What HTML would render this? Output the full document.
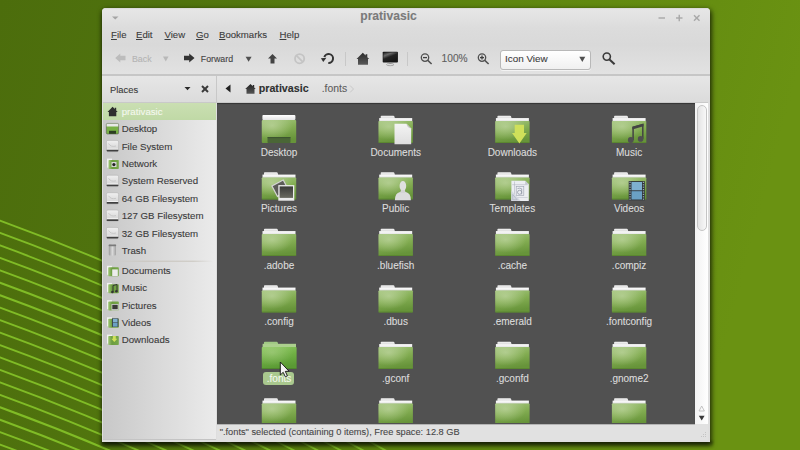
<!DOCTYPE html><html><head><meta charset="utf-8"><style>html,body{margin:0;padding:0;width:800px;height:450px;overflow:hidden;position:relative;font-family:"Liberation Sans", sans-serif;} u{text-decoration:underline;text-decoration-thickness:1px;text-underline-offset:0.6px;} div{-webkit-text-stroke:0.1px currentColor;}</style></head><body><svg style="position:absolute;left:0;top:0" width="800" height="450">
<defs>
<linearGradient id="bg" x1="0" y1="0" x2="1" y2="0.15">
<stop offset="0" stop-color="#4c6d0c"/>
<stop offset="0.2" stop-color="#4f720e"/>
<stop offset="0.6" stop-color="#5d850f"/>
<stop offset="1" stop-color="#6a9212"/>
</linearGradient>
<clipPath id="fan"><polygon points="0,215 102,253 395,452 0,452"/></clipPath>
<filter id="blur1"><feGaussianBlur stdDeviation="0.7"/></filter>
</defs>
<rect width="800" height="450" fill="url(#bg)"/>
<g clip-path="url(#fan)" stroke="#80bc26" stroke-width="1.9" fill="none" filter="url(#blur1)"><path d="M-10,216.9 Q250,310.5 510,475.5"/><path d="M-10,229.3 Q250,322.9 510,487.9"/><path d="M-10,241.8 Q250,335.4 510,500.4"/><path d="M-10,254.3 Q250,347.9 510,512.9"/><path d="M-10,266.7 Q250,360.3 510,525.3"/><path d="M-10,279.1 Q250,372.8 510,537.8"/><path d="M-10,291.6 Q250,385.2 510,550.2"/><path d="M-10,304.0 Q250,397.6 510,562.6"/><path d="M-10,316.5 Q250,410.1 510,575.1"/><path d="M-10,328.9 Q250,422.6 510,587.5"/><path d="M-10,341.4 Q250,435.0 510,600.0"/><path d="M-10,353.8 Q250,447.4 510,612.5"/><path d="M-10,366.3 Q250,459.9 510,624.9"/><path d="M-10,378.8 Q250,472.4 510,637.4"/><path d="M-10,391.2 Q250,484.8 510,649.8"/><path d="M-10,403.6 Q250,497.2 510,662.2"/><path d="M-10,416.1 Q250,509.7 510,674.7"/><path d="M-10,428.5 Q250,522.1 510,687.1"/><path d="M-10,441.0 Q250,534.6 510,699.6"/><path d="M-10,453.4 Q250,547.0 510,712.0"/></g></svg>
<div style="position:absolute;left:102px;top:8px;width:608px;height:434px;border-radius:4px 4px 0 0;box-shadow:1px 2px 5px 1px rgba(0,0,0,0.55), 0 3px 4px rgba(0,0,0,0.35);"></div>
<div style="position:absolute;left:101px;top:441px;width:612px;height:7px;background:linear-gradient(rgba(0,0,0,0.4),rgba(0,0,0,0));filter:blur(1.2px);"></div>
<div style="position:absolute;left:102px;top:8px;width:608px;height:434px;border-radius:4px 4px 0 0;background:#dedede;"></div>
<div style="position:absolute;left:102px;top:8px;width:608px;height:67px;border-radius:4px 4px 0 0;background:linear-gradient(#d6d6d6,#e6e6e6 2.5%,#dcdcdc 30%,#d9d9d9 55%,#e2e2e2);"></div>
<div style="position:absolute;left:102px;top:74px;width:608px;height:1.5px;background:#c6c6c6;"></div>
<div style="position:absolute;left:102px;top:75.5px;width:608px;height:27.5px;background:linear-gradient(#e6e6e6,#dbdbdb);"></div>
<div style="position:absolute;left:216px;top:76px;width:1px;height:27px;background:#c8c8c8;"></div>
<div style="position:absolute;left:103px;top:102px;width:605px;height:1px;background:#c9c9c9;"></div>
<div style="position:absolute;left:103px;top:103px;width:113px;height:336px;background:linear-gradient(90deg,#c8c8c8,#ebebeb);"></div>
<div style="position:absolute;left:103px;top:438.5px;width:113px;height:1px;background:#c4c4c4;"></div>
<div style="position:absolute;left:103px;top:103px;width:113px;height:17px;background:linear-gradient(#cadfb2,#c0d9a6);"></div>
<div style="position:absolute;left:217px;top:103px;width:478px;height:320.5px;background:#515151;box-shadow:inset 0 1px 1px rgba(0,0,0,0.35);"></div>
<div style="position:absolute;left:695px;top:103px;width:13px;height:320.5px;background:linear-gradient(90deg,#f2f2f2,#ffffff);"></div>
<div style="position:absolute;left:697px;top:105px;width:9.5px;height:126px;border-radius:5px;border:1px solid #c4c4c4;background:linear-gradient(90deg,#e4e4e4,#f8f8f8);box-sizing:border-box;"></div>
<div style="position:absolute;left:217px;top:423.5px;width:491px;height:16.5px;background:#e1e1e1;"></div>
<div style="position:absolute;left:217px;top:423.5px;width:478px;height:1px;background:#b4b4b4;"></div>
<div style="position:absolute;top:10.36px;font-size:12.1px;line-height:12.1px;color:#7a7a7a;font-weight:bold;white-space:nowrap;left:288.50px;width:200px;text-align:center;">prativasic</div>
<svg style="position:absolute;left:0;top:0" width="800" height="450"><polygon points="112,16.5 118.5,16.5 115.25,19.5" fill="#a4a4a4"/><g stroke="#a8a8a8" stroke-width="1.4"><line x1="658.5" y1="18" x2="665" y2="18"/><line x1="676" y1="18" x2="682.5" y2="18"/><line x1="679.25" y1="14.8" x2="679.25" y2="21.2"/><line x1="694" y1="15.2" x2="699.5" y2="20.7"/><line x1="699.5" y1="15.2" x2="694" y2="20.7"/></g></svg>
<div style="position:absolute;top:29.87px;font-size:9.6px;line-height:9.6px;color:#3c3c3c;font-weight:normal;white-space:nowrap;left:111.00px;"><u>F</u>ile</div>
<div style="position:absolute;top:29.87px;font-size:9.6px;line-height:9.6px;color:#3c3c3c;font-weight:normal;white-space:nowrap;left:136.00px;"><u>E</u>dit</div>
<div style="position:absolute;top:29.87px;font-size:9.6px;line-height:9.6px;color:#3c3c3c;font-weight:normal;white-space:nowrap;left:164.50px;"><u>V</u>iew</div>
<div style="position:absolute;top:29.87px;font-size:9.6px;line-height:9.6px;color:#3c3c3c;font-weight:normal;white-space:nowrap;left:196.00px;"><u>G</u>o</div>
<div style="position:absolute;top:29.87px;font-size:9.6px;line-height:9.6px;color:#3c3c3c;font-weight:normal;white-space:nowrap;left:219.00px;"><u>B</u>ookmarks</div>
<div style="position:absolute;top:29.87px;font-size:9.6px;line-height:9.6px;color:#3c3c3c;font-weight:normal;white-space:nowrap;left:279.50px;"><u>H</u>elp</div>
<div style="position:absolute;top:54.55px;font-size:8.8px;line-height:8.8px;color:#b4b4b4;font-weight:normal;white-space:nowrap;left:132.00px;">Back</div>
<div style="position:absolute;top:54.55px;font-size:8.8px;line-height:8.8px;color:#444;font-weight:normal;white-space:nowrap;left:200.80px;">Forward</div>
<div style="position:absolute;top:53.97px;font-size:10.2px;line-height:10.2px;color:#606060;font-weight:normal;white-space:nowrap;left:441.60px;">100%</div>
<div style="position:absolute;left:500px;top:49.5px;width:90.5px;height:20px;border-radius:3px;border:1px solid #b8b8b8;box-sizing:border-box;background:linear-gradient(#ffffff,#f0f0f0);box-shadow:0 1px 0 rgba(255,255,255,0.6);"></div>
<div style="position:absolute;top:54.22px;font-size:9.9px;line-height:9.9px;color:#3c3c3c;font-weight:normal;white-space:nowrap;left:505.00px;">Icon View</div>
<svg style="position:absolute;left:0;top:0" width="800" height="450">
<polygon points="579.3,56.8 585.3,56.8 582.3,62" fill="#505050"/>
<polygon points="125.5,55.8 120.3,55.8 120.3,53.6 115.2,58 120.3,62.4 120.3,60.2 125.5,60.2" fill="#bcbcbc"/>
<polygon points="163,56.5 168.5,56.5 165.75,61.5" fill="#b8b8b8"/>
<polygon points="184,55.8 189.2,55.8 189.2,53.6 194.5,58 189.2,62.4 189.2,60.2 184,60.2" fill="#333"/>
<polygon points="245.6,56.8 251.6,56.8 248.6,61.8" fill="#505050"/>
<polygon points="272.5,54 277,58.5 274.5,58.5 274.5,63.5 270.5,63.5 270.5,58.5 268,58.5" fill="#444"/>
<circle cx="299.6" cy="58.7" r="4.6" fill="none" stroke="#c4c4c4" stroke-width="1.8"/>
<line x1="296.5" y1="55.6" x2="302.7" y2="61.8" stroke="#c4c4c4" stroke-width="1.8"/>
<path d="M328.3,63 A4.5,4.5 0 1 0 324.3,57" fill="none" stroke="#333" stroke-width="2"/>
<polygon points="320.9,58.2 326.4,57.8 323.3,62" fill="#333"/>
<line x1="345.5" y1="52" x2="345.5" y2="66" stroke="#c8c8c8" stroke-width="1"/>
<linearGradient id="hg" x1="0" y1="0" x2="0" y2="1"><stop offset="0" stop-color="#2a2a2a"/><stop offset="1" stop-color="#5a5a5a"/></linearGradient>
<polygon points="356.5,59 362.8,52.8 365.6,55.5 365.6,54.2 367.3,54.2 367.3,57.2 369.3,59 368,59 368,64.8 358,64.8 358,59" fill="url(#hg)"/>
<linearGradient id="mg" x1="0" y1="0" x2="0.6" y2="1"><stop offset="0" stop-color="#1e1e1e"/><stop offset="0.3" stop-color="#6a6a6a"/><stop offset="0.55" stop-color="#222"/><stop offset="1" stop-color="#161616"/></linearGradient>
<rect x="382.7" y="51.7" width="15.2" height="10.8" rx="0.8" fill="#161616"/>
<rect x="383.4" y="52.4" width="13.8" height="9.4" fill="url(#mg)"/>
<rect x="389.2" y="62.5" width="2.2" height="1.5" fill="#888"/>
<ellipse cx="390.2" cy="64.6" rx="3.7" ry="1.1" fill="none" stroke="#999" stroke-width="0.8"/>
<line x1="407.5" y1="52" x2="407.5" y2="66" stroke="#c8c8c8" stroke-width="1"/>
<circle cx="425" cy="57.6" r="3.7" fill="none" stroke="#505050" stroke-width="1.3"/>
<line x1="423" y1="57.6" x2="427" y2="57.6" stroke="#404040" stroke-width="1.3"/>
<line x1="427.8" y1="60.4" x2="431.6" y2="64" stroke="#505050" stroke-width="1.5"/>
<circle cx="482" cy="57.6" r="3.7" fill="none" stroke="#505050" stroke-width="1.3"/>
<line x1="480" y1="57.6" x2="484" y2="57.6" stroke="#404040" stroke-width="1.3"/>
<line x1="482" y1="55.6" x2="482" y2="59.6" stroke="#404040" stroke-width="1.3"/>
<line x1="484.8" y1="60.4" x2="488.6" y2="64" stroke="#505050" stroke-width="1.5"/>
<circle cx="606.8" cy="56.6" r="3.6" fill="none" stroke="#3a3a3a" stroke-width="1.6"/>
<line x1="609.5" y1="59.4" x2="614.6" y2="64.2" stroke="#3a3a3a" stroke-width="2"/>
<polygon points="184.5,87 190.5,87 187.5,90.2" fill="#2a2a2a"/>
<g stroke="#3a3a3a" stroke-width="2"><line x1="202" y1="86" x2="208" y2="92"/><line x1="208" y1="86" x2="202" y2="92"/></g>
<polygon points="230.5,84.5 230.5,92.5 225.5,88.5" fill="#222"/>
<linearGradient id="bhg" x1="0" y1="0" x2="0" y2="1"><stop offset="0" stop-color="#222"/><stop offset="1" stop-color="#555"/></linearGradient><polygon points="245.2,89 250.5,84 252.8,86.2 252.8,85 254.2,85 254.2,87.6 255.7,89 254.5,89 254.5,93.7 246.5,93.7 246.5,89" fill="url(#bhg)"/>
<polyline points="350,85.5 353.5,89 350,92.5" fill="none" stroke="#c8c8c8" stroke-width="1"/>
</svg>
<svg style="position:absolute;left:0;top:0" width="800" height="450"><defs><linearGradient id="sg" x1="0" y1="0" x2="1" y2="0"><stop offset="0" stop-color="#a0c878"/><stop offset="0.35" stop-color="#6c9c40"/><stop offset="1" stop-color="#78a84a"/></linearGradient><linearGradient id="drv" x1="0" y1="0" x2="0" y2="1"><stop offset="0" stop-color="#f0f0f0"/><stop offset="1" stop-color="#d0d0d0"/></linearGradient><linearGradient id="trash" x1="0" y1="0" x2="1" y2="0"><stop offset="0" stop-color="#9a9a9a"/><stop offset="0.5" stop-color="#dadada"/><stop offset="1" stop-color="#a0a0a0"/></linearGradient></defs><polygon points="107.5,112 112.6,106.7 114.8,109 114.8,107.8 116.2,107.8 116.2,110.4 117.7,112 116.3,112 116.3,116.2 108.9,116.2 108.9,112" fill="#2e2e2e"/><rect x="106.3" y="123.4" width="12.3" height="10.6" rx="1.2" fill="#78b046" stroke="#4a4a4a" stroke-width="0.5"/><rect x="106.6" y="123.7" width="11.7" height="2.8" fill="#e8e8e8"/><rect x="109" y="130.8" width="7" height="3" fill="#2c3e22"/><rect x="106.4" y="140.4" width="12.2" height="11.4" rx="1.5" fill="url(#drv)" stroke="#b4b4b4" stroke-width="0.6"/><rect x="106.6" y="149.6" width="11.8" height="1.8" rx="0.8" fill="#404040"/><rect x="107" y="148.7" width="11" height="0.8" fill="#f8f8f8"/><path d="M108.5,143.5 Q111,147.5 116,146.0" fill="none" stroke="#c4c4c4" stroke-width="0.9"/><rect x="106.4" y="175.2" width="12.2" height="11.4" rx="1.5" fill="url(#drv)" stroke="#b4b4b4" stroke-width="0.6"/><rect x="106.6" y="184.4" width="11.8" height="1.8" rx="0.8" fill="#404040"/><rect x="107" y="183.5" width="11" height="0.8" fill="#f8f8f8"/><path d="M108.5,178.3 Q111,182.3 116,180.8" fill="none" stroke="#c4c4c4" stroke-width="0.9"/><rect x="106.4" y="192.7" width="12.2" height="11.4" rx="1.5" fill="url(#drv)" stroke="#b4b4b4" stroke-width="0.6"/><rect x="106.6" y="201.9" width="11.8" height="1.8" rx="0.8" fill="#404040"/><rect x="107" y="201.0" width="11" height="0.8" fill="#f8f8f8"/><path d="M108.5,195.8 Q111,199.8 116,198.3" fill="none" stroke="#c4c4c4" stroke-width="0.9"/><rect x="106.4" y="210.0" width="12.2" height="11.4" rx="1.5" fill="url(#drv)" stroke="#b4b4b4" stroke-width="0.6"/><rect x="106.6" y="219.2" width="11.8" height="1.8" rx="0.8" fill="#404040"/><rect x="107" y="218.3" width="11" height="0.8" fill="#f8f8f8"/><path d="M108.5,213.1 Q111,217.1 116,215.6" fill="none" stroke="#c4c4c4" stroke-width="0.9"/><rect x="106.4" y="227.4" width="12.2" height="11.4" rx="1.5" fill="url(#drv)" stroke="#b4b4b4" stroke-width="0.6"/><rect x="106.6" y="236.6" width="11.8" height="1.8" rx="0.8" fill="#404040"/><rect x="107" y="235.7" width="11" height="0.8" fill="#f8f8f8"/><path d="M108.5,230.5 Q111,234.5 116,233.0" fill="none" stroke="#c4c4c4" stroke-width="0.9"/><rect x="107" y="158.6" width="5" height="9" fill="#f0f0f0"/><rect x="108.5" y="160" width="10.3" height="9" rx="0.8" fill="url(#sg)"/><rect x="111.5" y="162" width="5" height="5" fill="#d8d8d8"/><circle cx="113.9" cy="164.6" r="1.6" fill="#222"/><rect x="108.8" y="244.6" width="7.2" height="10.8" rx="1" fill="url(#trash)"/><rect x="108.6" y="244.6" width="7.6" height="1.6" rx="0.8" fill="#7a7a7a"/><rect x="107" y="265.8" width="5" height="9" fill="#f2f2f2"/><rect x="108.2" y="267.2" width="10.6" height="9" rx="0.8" fill="url(#sg)"/><rect x="112.2" y="265.8" width="0" height="0"/><rect x="112.2" y="269.4" width="5.6" height="6.6" fill="#ececec"/><rect x="107" y="282.9" width="5" height="9" fill="#f2f2f2"/><rect x="108.2" y="284.3" width="10.6" height="9" rx="0.8" fill="url(#sg)"/><path d="M113,292 V285.5 L117,284.5 V291" stroke="#333" stroke-width="1" fill="none"/><circle cx="112.4" cy="292" r="1.3" fill="#333"/><circle cx="116.4" cy="291.2" r="1.3" fill="#333"/><rect x="107" y="300.2" width="5" height="9" fill="#f2f2f2"/><rect x="108.2" y="301.6" width="10.6" height="9" rx="0.8" fill="url(#sg)"/><rect x="111.5" y="304" width="7" height="6.5" fill="#d8d8d8"/><rect x="112.3" y="304.8" width="5.4" height="4.4" fill="#3a3a36"/><rect x="107" y="317.3" width="5" height="9" fill="#f2f2f2"/><rect x="108.2" y="318.7" width="10.6" height="9" rx="0.8" fill="url(#sg)"/><rect x="112" y="318.3" width="6.5" height="8.6" fill="#3c4a50"/><rect x="113" y="318.8" width="4.5" height="3.6" fill="#80b0d0"/><rect x="113" y="323" width="4.5" height="3.6" fill="#6aa0c4"/><rect x="107" y="334.6" width="5" height="9" fill="#f2f2f2"/><rect x="108.2" y="336.0" width="10.6" height="9" rx="0.8" fill="url(#sg)"/><path d="M112.8,336 H115.8 V338.8 H117.3 L114.3,342 L111.3,338.8 H112.8 Z" fill="#cfe05a"/><linearGradient id="sep" x1="0" y1="0" x2="1" y2="0"><stop offset="0" stop-color="#c8c4bc" stop-opacity="0"/><stop offset="0.3" stop-color="#c8c4bc"/><stop offset="0.8" stop-color="#c8c4bc"/><stop offset="1" stop-color="#c8c4bc" stop-opacity="0"/></linearGradient><rect x="115" y="260.7" width="98" height="1" fill="url(#sep)"/></svg>
<div style="position:absolute;top:84.74px;font-size:9.4px;line-height:9.4px;color:#3a3a3a;font-weight:normal;white-space:nowrap;left:110.00px;">Places</div>
<div style="position:absolute;top:83.04px;font-size:10.7px;line-height:10.7px;color:#303030;font-weight:bold;white-space:nowrap;left:258.70px;">prativasic</div>
<div style="position:absolute;top:84.10px;font-size:10.4px;line-height:10.4px;color:#5c5c5c;font-weight:normal;white-space:nowrap;left:321.70px;">.fonts</div>
<div style="position:absolute;top:107.49px;font-size:9.7px;line-height:9.7px;color:#f4f8ee;font-weight:normal;white-space:nowrap;left:121.70px;">prativasic</div>
<div style="position:absolute;top:124.49px;font-size:9.7px;line-height:9.7px;color:#3a3a3a;font-weight:normal;white-space:nowrap;left:121.70px;">Desktop</div>
<div style="position:absolute;top:141.59px;font-size:9.7px;line-height:9.7px;color:#3a3a3a;font-weight:normal;white-space:nowrap;left:121.70px;">File System</div>
<div style="position:absolute;top:158.99px;font-size:9.7px;line-height:9.7px;color:#3a3a3a;font-weight:normal;white-space:nowrap;left:121.70px;">Network</div>
<div style="position:absolute;top:176.39px;font-size:9.7px;line-height:9.7px;color:#3a3a3a;font-weight:normal;white-space:nowrap;left:121.70px;">System Reserved</div>
<div style="position:absolute;top:193.89px;font-size:9.7px;line-height:9.7px;color:#3a3a3a;font-weight:normal;white-space:nowrap;left:121.70px;">64 GB Filesystem</div>
<div style="position:absolute;top:211.19px;font-size:9.7px;line-height:9.7px;color:#3a3a3a;font-weight:normal;white-space:nowrap;left:121.70px;">127 GB Filesystem</div>
<div style="position:absolute;top:228.59px;font-size:9.7px;line-height:9.7px;color:#3a3a3a;font-weight:normal;white-space:nowrap;left:121.70px;">32 GB Filesystem</div>
<div style="position:absolute;top:245.69px;font-size:9.7px;line-height:9.7px;color:#3a3a3a;font-weight:normal;white-space:nowrap;left:121.70px;">Trash</div>
<div style="position:absolute;top:266.39px;font-size:9.7px;line-height:9.7px;color:#3a3a3a;font-weight:normal;white-space:nowrap;left:121.70px;">Documents</div>
<div style="position:absolute;top:283.49px;font-size:9.7px;line-height:9.7px;color:#3a3a3a;font-weight:normal;white-space:nowrap;left:121.70px;">Music</div>
<div style="position:absolute;top:300.79px;font-size:9.7px;line-height:9.7px;color:#3a3a3a;font-weight:normal;white-space:nowrap;left:121.70px;">Pictures</div>
<div style="position:absolute;top:317.89px;font-size:9.7px;line-height:9.7px;color:#3a3a3a;font-weight:normal;white-space:nowrap;left:121.70px;">Videos</div>
<div style="position:absolute;top:335.19px;font-size:9.7px;line-height:9.7px;color:#3a3a3a;font-weight:normal;white-space:nowrap;left:121.70px;">Downloads</div>
<div style="position:absolute;left:217px;top:103px;width:478px;height:320px;overflow:hidden;">
<svg style="position:absolute;left:0;top:0" width="478" height="320"><defs>
<linearGradient id="fbody" x1="0" y1="0" x2="0.25" y2="1">
<stop offset="0" stop-color="#a2c47c"/><stop offset="0.5" stop-color="#83ad52"/><stop offset="1" stop-color="#67943a"/></linearGradient>
<radialGradient id="fhl" cx="0.3" cy="0.25" r="0.6"><stop offset="0" stop-color="#c8dcac" stop-opacity="0.6"/><stop offset="1" stop-color="#c8dcac" stop-opacity="0"/></radialGradient>
<linearGradient id="fband" x1="0" y1="0" x2="0" y2="1"><stop offset="0" stop-color="#ffffff"/><stop offset="1" stop-color="#e2e2e2"/></linearGradient>
<linearGradient id="ftab" x1="0" y1="0" x2="0" y2="1"><stop offset="0" stop-color="#f4f4f4"/><stop offset="1" stop-color="#d8d8d8"/></linearGradient>
<linearGradient id="paper" x1="0" y1="0" x2="0" y2="1"><stop offset="0" stop-color="#f4f4f4"/><stop offset="1" stop-color="#dedede"/></linearGradient>
<linearGradient id="photo" x1="0" y1="0" x2="0" y2="1"><stop offset="0" stop-color="#3a3a38"/><stop offset="1" stop-color="#6a6a60"/></linearGradient>
<symbol id="folder" viewBox="0 0 35 28" overflow="visible">
<path d="M2.2,3 V1 Q2.2,0.2 3,0.2 H14.8 Q15.8,0.2 16,1.2 L16.4,3 Z" fill="url(#ftab)"/>
<rect x="0.7" y="2.6" width="33" height="3.3" fill="url(#fband)"/>
<rect x="0" y="5.5" width="34.4" height="22" rx="0.8" fill="url(#fbody)"/>
<rect x="0" y="5.5" width="34.4" height="22" rx="0.8" fill="url(#fhl)"/>
<rect x="0" y="26.6" width="34.4" height="0.9" fill="#54802c" opacity="0.7"/>
</symbol>
<linearGradient id="sbody" x1="0" y1="0" x2="0.25" y2="1"><stop offset="0" stop-color="#8cc860"/><stop offset="0.5" stop-color="#70b044"/><stop offset="1" stop-color="#5a9a34"/></linearGradient>
<symbol id="folderSel" viewBox="0 0 35 28" overflow="visible">
<path d="M2.2,3 V1 Q2.2,0.2 3,0.2 H14.8 Q15.8,0.2 16,1.2 L16.4,3 Z" fill="#a0c884"/>
<rect x="0.8" y="2.3" width="33.4" height="3.6" fill="#acd08e"/>
<rect x="0" y="5.5" width="34.8" height="22" rx="0.8" fill="url(#sbody)"/>
<rect x="0" y="5.5" width="34.8" height="22" rx="0.8" fill="url(#fhl)" opacity="0.6"/>
<rect x="0" y="26.6" width="34.8" height="0.9" fill="#4a7a2a" opacity="0.7"/>
</symbol>
</defs><g transform="translate(44.80,12.50)"><rect x="0.6" y="-0.6" width="33" height="5.2" rx="1" fill="url(#fband)"/><rect x="0" y="4.4" width="34.4" height="23.1" rx="1" fill="url(#fbody)"/><rect x="0" y="4.4" width="34.4" height="23.1" rx="1" fill="url(#fhl)"/><rect x="5.7" y="21.6" width="23" height="5.9" rx="0.8" fill="#4a6636"/><rect x="5.7" y="21.6" width="23" height="1" fill="#3c5430"/></g><g transform="translate(161.50,12.50)"><use href="#folder" x="0" y="0" width="35" height="28"/><path d="M16,8.2 H28 L32.7,12.9 V28.8 H16 Z" fill="url(#paper)"/><path d="M28,8.2 Q28.6,12.2 32.7,12.9 Q30,10.4 28,8.2 Z" fill="#c4c4c4"/></g><g transform="translate(278.20,12.50)"><use href="#folder" x="0" y="0" width="35" height="28"/><path d="M19.5,9.2 H28.8 V17.5 H31.5 L24.2,27.9 L16.8,17.5 H19.5 Z" fill="#cfe05a"/></g><g transform="translate(394.90,12.50)"><use href="#folder" x="0" y="0" width="35" height="28"/><path d="M21.2,24.5 V11.8 L30.9,9 V23.3" fill="none" stroke="#444" stroke-width="1.5"/><path d="M20.5,11.3 L31.6,8.2 V10.8 L20.5,13.9 Z" fill="#444"/><circle cx="18.9" cy="24.5" r="2.9" fill="#505050"/><circle cx="28.7" cy="23.4" r="2.8" fill="#505050"/></g><g transform="translate(44.80,69.00)"><use href="#folder" x="0" y="0" width="35" height="28"/><g transform="rotate(-28 19 16)"><rect x="11.5" y="9.5" width="14" height="13" fill="#d4d4d4"/><rect x="12.7" y="10.7" width="11.6" height="10.4" fill="#5c5c58"/></g><rect x="16.5" y="13.1" width="16" height="15.6" fill="#ececec"/><rect x="17.8" y="14.4" width="13.4" height="11.5" fill="url(#photo)"/></g><g transform="translate(161.50,69.00)"><use href="#folder" x="0" y="0" width="35" height="28"/><path d="M16.4,28.3 Q16.4,21 21.5,20 L27.3,20 Q32.4,21 32.4,28.3 Z" fill="#dcdcdc"/><ellipse cx="24.4" cy="14" rx="3.3" ry="5" fill="#e0e0e0"/><path d="M22.5,18 L26.3,18 L27.3,21 L21.5,21 Z" fill="#d4d4d4"/></g><g transform="translate(278.20,69.00)"><use href="#folder" x="0" y="0" width="35" height="28"/><path d="M16.2,8.7 H30 L33.6,12.3 V29.1 H16.2 Z" fill="#eceef2"/><path d="M30,8.7 V12.3 H33.6 Z" fill="#c4c8d0"/><line x1="19.3" y1="9.5" x2="19.3" y2="27.5" stroke="#a8acb8" stroke-width="0.5"/><line x1="17" y1="12.7" x2="32.5" y2="12.7" stroke="#a8acb8" stroke-width="0.5"/><line x1="17" y1="25.5" x2="32.5" y2="25.5" stroke="#b8bcc8" stroke-width="0.5"/><rect x="21" y="14.5" width="7.6" height="9" fill="none" stroke="#9aa0ae" stroke-width="0.6"/><ellipse cx="24.4" cy="20.3" rx="2.1" ry="2" fill="none" stroke="#8a90a0" stroke-width="0.7"/><path d="M22.3,16.6 Q24.5,15.6 26.5,16.8 V22.4" fill="none" stroke="#8a90a0" stroke-width="0.7"/><path d="M16.2,18.5 L25.5,29.1 H16.2 Z" fill="#d4d8e2"/><path d="M17.5,22.5 L22,27.8 H17.5 Z" fill="none" stroke="#a0a6b4" stroke-width="0.5"/></g><g transform="translate(394.90,69.00)"><use href="#folder" x="0" y="0" width="35" height="28"/><rect x="16.8" y="9.1" width="16.1" height="19.2" fill="#2e3438"/><rect x="19.6" y="10" width="10.5" height="8.3" fill="#7eb0d0"/><rect x="19.6" y="19.2" width="10.5" height="8.3" fill="#6aa0c4"/><rect x="17.5" y="9.8" width="1.3" height="1.2" fill="#9ab"/><rect x="30.9" y="9.8" width="1.3" height="1.2" fill="#9ab"/><rect x="17.5" y="12.2" width="1.3" height="1.2" fill="#9ab"/><rect x="30.9" y="12.2" width="1.3" height="1.2" fill="#9ab"/><rect x="17.5" y="14.6" width="1.3" height="1.2" fill="#9ab"/><rect x="30.9" y="14.6" width="1.3" height="1.2" fill="#9ab"/><rect x="17.5" y="17.0" width="1.3" height="1.2" fill="#9ab"/><rect x="30.9" y="17.0" width="1.3" height="1.2" fill="#9ab"/><rect x="17.5" y="19.4" width="1.3" height="1.2" fill="#9ab"/><rect x="30.9" y="19.4" width="1.3" height="1.2" fill="#9ab"/><rect x="17.5" y="21.8" width="1.3" height="1.2" fill="#9ab"/><rect x="30.9" y="21.8" width="1.3" height="1.2" fill="#9ab"/><rect x="17.5" y="24.2" width="1.3" height="1.2" fill="#9ab"/><rect x="30.9" y="24.2" width="1.3" height="1.2" fill="#9ab"/><rect x="17.5" y="26.6" width="1.3" height="1.2" fill="#9ab"/><rect x="30.9" y="26.6" width="1.3" height="1.2" fill="#9ab"/></g><g transform="translate(44.80,125.50)"><use href="#folder" x="0" y="0" width="35" height="28"/></g><g transform="translate(161.50,125.50)"><use href="#folder" x="0" y="0" width="35" height="28"/></g><g transform="translate(278.20,125.50)"><use href="#folder" x="0" y="0" width="35" height="28"/></g><g transform="translate(394.90,125.50)"><use href="#folder" x="0" y="0" width="35" height="28"/></g><g transform="translate(44.80,182.00)"><use href="#folder" x="0" y="0" width="35" height="28"/></g><g transform="translate(161.50,182.00)"><use href="#folder" x="0" y="0" width="35" height="28"/></g><g transform="translate(278.20,182.00)"><use href="#folder" x="0" y="0" width="35" height="28"/></g><g transform="translate(394.90,182.00)"><use href="#folder" x="0" y="0" width="35" height="28"/></g><g transform="translate(44.80,238.50)"><use href="#folderSel" x="0" y="0" width="35" height="28"/></g><g transform="translate(161.50,238.50)"><use href="#folder" x="0" y="0" width="35" height="28"/></g><g transform="translate(278.20,238.50)"><use href="#folder" x="0" y="0" width="35" height="28"/></g><g transform="translate(394.90,238.50)"><use href="#folder" x="0" y="0" width="35" height="28"/></g><g transform="translate(44.80,295.00)"><use href="#folder" x="0" y="0" width="35" height="28"/></g><g transform="translate(161.50,295.00)"><use href="#folder" x="0" y="0" width="35" height="28"/></g><g transform="translate(278.20,295.00)"><use href="#folder" x="0" y="0" width="35" height="28"/></g><g transform="translate(394.90,295.00)"><use href="#folder" x="0" y="0" width="35" height="28"/></g></svg>
<div style="position:absolute;top:44.64px;font-size:10px;line-height:10px;color:#dcdcdc;font-weight:normal;white-space:nowrap;left:-38.00px;width:200px;text-align:center;">Desktop</div>
<div style="position:absolute;top:44.64px;font-size:10px;line-height:10px;color:#dcdcdc;font-weight:normal;white-space:nowrap;left:78.70px;width:200px;text-align:center;">Documents</div>
<div style="position:absolute;top:44.64px;font-size:10px;line-height:10px;color:#dcdcdc;font-weight:normal;white-space:nowrap;left:195.40px;width:200px;text-align:center;">Downloads</div>
<div style="position:absolute;top:44.64px;font-size:10px;line-height:10px;color:#dcdcdc;font-weight:normal;white-space:nowrap;left:312.10px;width:200px;text-align:center;">Music</div>
<div style="position:absolute;top:101.13px;font-size:10px;line-height:10px;color:#dcdcdc;font-weight:normal;white-space:nowrap;left:-38.00px;width:200px;text-align:center;">Pictures</div>
<div style="position:absolute;top:101.13px;font-size:10px;line-height:10px;color:#dcdcdc;font-weight:normal;white-space:nowrap;left:78.70px;width:200px;text-align:center;">Public</div>
<div style="position:absolute;top:101.13px;font-size:10px;line-height:10px;color:#dcdcdc;font-weight:normal;white-space:nowrap;left:195.40px;width:200px;text-align:center;">Templates</div>
<div style="position:absolute;top:101.13px;font-size:10px;line-height:10px;color:#dcdcdc;font-weight:normal;white-space:nowrap;left:312.10px;width:200px;text-align:center;">Videos</div>
<div style="position:absolute;top:157.63px;font-size:10px;line-height:10px;color:#dcdcdc;font-weight:normal;white-space:nowrap;left:-38.00px;width:200px;text-align:center;">.adobe</div>
<div style="position:absolute;top:157.63px;font-size:10px;line-height:10px;color:#dcdcdc;font-weight:normal;white-space:nowrap;left:78.70px;width:200px;text-align:center;">.bluefish</div>
<div style="position:absolute;top:157.63px;font-size:10px;line-height:10px;color:#dcdcdc;font-weight:normal;white-space:nowrap;left:195.40px;width:200px;text-align:center;">.cache</div>
<div style="position:absolute;top:157.63px;font-size:10px;line-height:10px;color:#dcdcdc;font-weight:normal;white-space:nowrap;left:312.10px;width:200px;text-align:center;">.compiz</div>
<div style="position:absolute;top:214.13px;font-size:10px;line-height:10px;color:#dcdcdc;font-weight:normal;white-space:nowrap;left:-38.00px;width:200px;text-align:center;">.config</div>
<div style="position:absolute;top:214.13px;font-size:10px;line-height:10px;color:#dcdcdc;font-weight:normal;white-space:nowrap;left:78.70px;width:200px;text-align:center;">.dbus</div>
<div style="position:absolute;top:214.13px;font-size:10px;line-height:10px;color:#dcdcdc;font-weight:normal;white-space:nowrap;left:195.40px;width:200px;text-align:center;">.emerald</div>
<div style="position:absolute;top:214.13px;font-size:10px;line-height:10px;color:#dcdcdc;font-weight:normal;white-space:nowrap;left:312.10px;width:200px;text-align:center;">.fontconfig</div>
<div style="position:absolute;left:45.69999999999999px;top:268.6px;width:31.6px;height:13.4px;border-radius:3px;background:#a9c88e;"></div>
<div style="position:absolute;top:270.64px;font-size:10px;line-height:10px;color:#f4f8f0;font-weight:normal;white-space:nowrap;left:-38.00px;width:200px;text-align:center;">.fonts</div>
<div style="position:absolute;top:270.64px;font-size:10px;line-height:10px;color:#dcdcdc;font-weight:normal;white-space:nowrap;left:78.70px;width:200px;text-align:center;">.gconf</div>
<div style="position:absolute;top:270.64px;font-size:10px;line-height:10px;color:#dcdcdc;font-weight:normal;white-space:nowrap;left:195.40px;width:200px;text-align:center;">.gconfd</div>
<div style="position:absolute;top:270.64px;font-size:10px;line-height:10px;color:#dcdcdc;font-weight:normal;white-space:nowrap;left:312.10px;width:200px;text-align:center;">.gnome2</div>
</div>
<svg style="position:absolute;left:0;top:0" width="800" height="450"><polygon points="699,411 701.7,406 704.4,411" fill="none" stroke="#b8b8b8" stroke-width="0.8"/><polygon points="698.8,415.8 704.6,415.8 701.7,420.5" fill="#3a3a3a"/><polygon points="280.3,362 280.3,375 283.2,372.3 285.3,376.8 287.4,375.8 285.3,371.4 289,371.2" fill="#f4f4f4" stroke="#111" stroke-width="0.9" stroke-linejoin="round"/><g fill="#c4c4c4"><rect x="705" y="432" width="1" height="1"/><rect x="703" y="434" width="1" height="1"/><rect x="705" y="434" width="1" height="1"/><rect x="701" y="436" width="1" height="1"/><rect x="703" y="436" width="1" height="1"/><rect x="705" y="436" width="1" height="1"/></g></svg>
<div style="position:absolute;top:427.77px;font-size:9.25px;line-height:9.25px;color:#484848;font-weight:normal;white-space:nowrap;left:219.70px;">".fonts" selected (containing 0 items), Free space: 12.8 GB</div></body></html>
